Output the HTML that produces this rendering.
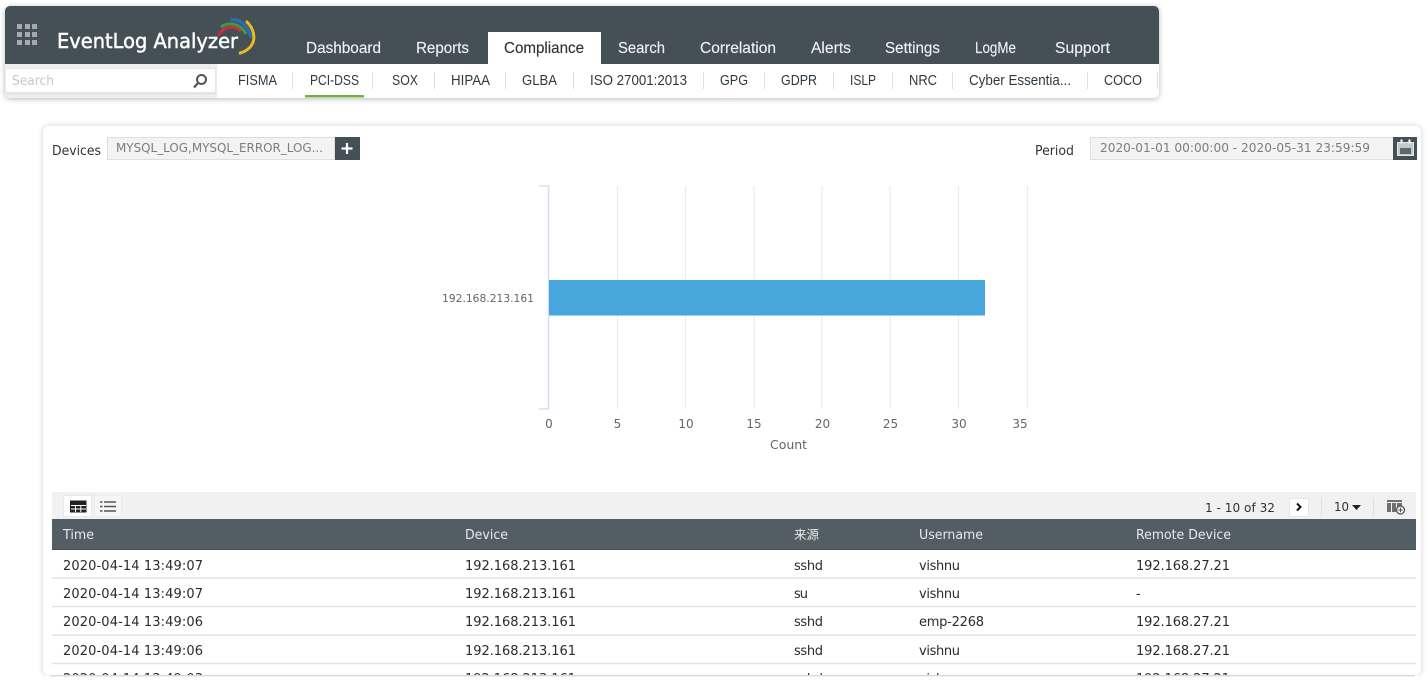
<!DOCTYPE html>
<html><head><meta charset="utf-8"><style>
html,body{margin:0;padding:0;width:1428px;height:682px;overflow:hidden;background:#fff}
.a{position:absolute}
svg{position:absolute;left:0;top:0}
text{font-family:"DejaVu Sans","Noto Sans CJK SC",sans-serif;font-size:13px;fill:#2b2b2b}
.n{font-family:"Liberation Sans",sans-serif;font-size:16px;fill:#eef0f1;stroke:#eef0f1;stroke-width:.15px}
.s{font-family:"Liberation Sans",sans-serif;font-size:15px;fill:#2e3a42}
.h{fill:#e6e9ea}
</style></head><body>
<div class="a" style="left:5px;top:6px;width:1154px;height:92px;border-radius:5px;background:#fff;box-shadow:0 1px 6px rgba(0,0,0,.28)"></div>
<div class="a" style="left:5px;top:6px;width:1154px;height:58px;border-radius:5px 5px 0 0;background:#444f56"></div>
<div class="a" style="left:5px;top:64px;width:212px;height:34px;background:#eef0f0;border-radius:0 0 0 5px"></div>
<div class="a" style="left:6px;top:68px;width:209px;height:23px;background:#fff;border:1px solid #e6e6e6;border-left:0;box-shadow:0 1px 1px #ddd"></div>
<div class="a" style="left:488px;top:32px;width:113px;height:32px;background:#fff"></div>
<div class="a" style="left:43px;top:126px;width:1378px;height:549px;border-radius:6px;background:#fff;box-shadow:0 0 6px rgba(0,0,0,.2)"></div>
<svg width="1428" height="682" viewBox="0 0 1428 682">
<!-- grid -->
<g fill="#a4aaae">
<rect x="17" y="24" width="5" height="5"/><rect x="25" y="24" width="5" height="5"/><rect x="32" y="24" width="5" height="5"/>
<rect x="17" y="32" width="5" height="5"/><rect x="25" y="32" width="5" height="5"/><rect x="32" y="32" width="5" height="5"/>
<rect x="17" y="40" width="5" height="5"/><rect x="25" y="40" width="5" height="5"/><rect x="32" y="40" width="5" height="5"/>
</g>
<!-- logo -->
<text x="57" y="48" textLength="181" lengthAdjust="spacingAndGlyphs" style="font-size:20px;fill:#fff;stroke:#fff;stroke-width:.45px;font-family:'DejaVu Sans',sans-serif">EventLog Analyzer</text>
<g fill="none">
<path d="M218.500 36C222 27 233 24 241 31" stroke="#c6303c" stroke-width="3"/>
<path d="M221 27C229 21 241 24 246 34" stroke="#3a9a4a" stroke-width="3"/>
<path d="M231 19.500C241 19 249 27 251 38" stroke="#2c6cb5" stroke-width="3.200"/>
<path d="M246 21C257 31 258 48 239 53.500" stroke="#eeb923" stroke-width="3"/>
</g>
<!-- nav -->
<text class="n" x="306" y="53" textLength="75" lengthAdjust="spacingAndGlyphs">Dashboard</text>
<text class="n" x="416" y="53" textLength="53" lengthAdjust="spacingAndGlyphs">Reports</text>
<text class="n" x="504" y="53" textLength="80" lengthAdjust="spacingAndGlyphs" style="fill:#333;stroke:#333">Compliance</text>
<text class="n" x="618" y="53" textLength="47" lengthAdjust="spacingAndGlyphs">Search</text>
<text class="n" x="700" y="53" textLength="76" lengthAdjust="spacingAndGlyphs">Correlation</text>
<text class="n" x="811" y="53" textLength="40" lengthAdjust="spacingAndGlyphs">Alerts</text>
<text class="n" x="885" y="53" textLength="55" lengthAdjust="spacingAndGlyphs">Settings</text>
<text class="n" x="975" y="53" textLength="41" lengthAdjust="spacingAndGlyphs">LogMe</text>
<text class="n" x="1055" y="53" textLength="55" lengthAdjust="spacingAndGlyphs">Support</text>
<!-- search -->
<text x="12" y="85" textLength="42" lengthAdjust="spacingAndGlyphs" style="font-family:'DejaVu Sans';font-size:13px;fill:#c4c8ca">Search</text>
<circle cx="201.500" cy="79.500" r="4.500" fill="none" stroke="#555" stroke-width="2"/>
<path d="M198 83L194 87.500" stroke="#555" stroke-width="2.200"/>
<!-- subnav -->
<text class="s" x="238" y="85" textLength="39" lengthAdjust="spacingAndGlyphs">FISMA</text>
<text class="s" x="310" y="85" textLength="49" lengthAdjust="spacingAndGlyphs">PCI-DSS</text>
<text class="s" x="392" y="85" textLength="26" lengthAdjust="spacingAndGlyphs">SOX</text>
<text class="s" x="451" y="85" textLength="39" lengthAdjust="spacingAndGlyphs">HIPAA</text>
<text class="s" x="522" y="85" textLength="35" lengthAdjust="spacingAndGlyphs">GLBA</text>
<text class="s" x="590" y="85" textLength="97" lengthAdjust="spacingAndGlyphs">ISO 27001:2013</text>
<text class="s" x="720" y="85" textLength="28" lengthAdjust="spacingAndGlyphs">GPG</text>
<text class="s" x="781" y="85" textLength="36" lengthAdjust="spacingAndGlyphs">GDPR</text>
<text class="s" x="850" y="85" textLength="26" lengthAdjust="spacingAndGlyphs">ISLP</text>
<text class="s" x="909" y="85" textLength="28" lengthAdjust="spacingAndGlyphs">NRC</text>
<text class="s" x="969" y="85" textLength="102" lengthAdjust="spacingAndGlyphs">Cyber Essentia...</text>
<text class="s" x="1104" y="85" textLength="38" lengthAdjust="spacingAndGlyphs">COCO</text>
<path d="M292.500 72v17M372.500 72v17M434.500 72v17M505.500 72v17M573.500 72v17M703.500 72v17M764.500 72v17M833.500 72v17M892.500 72v17M952.500 72v17M1087.500 72v17M1157.500 72v17" stroke="#dcdfe0"/>
<rect x="305" y="95" width="59" height="2.500" fill="#74b13f"/>
<!-- devices -->
<text x="52" y="155" textLength="49" lengthAdjust="spacingAndGlyphs" style="fill:#333">Devices</text>
<rect x="107.500" y="137.500" width="227" height="22" fill="#f3f3f3" stroke="#dedede"/>
<text x="116" y="152" textLength="207" lengthAdjust="spacingAndGlyphs" style="font-size:12px;fill:#7d7d7d">MYSQL_LOG,MYSQL_ERROR_LOG...</text>
<rect x="335" y="137" width="25" height="23" fill="#444f56"/>
<path d="M347 143v11M341.500 148.500h11" stroke="#fff" stroke-width="2.200"/>
<!-- period -->
<text x="1035" y="155" textLength="39" lengthAdjust="spacingAndGlyphs" style="fill:#333">Period</text>
<rect x="1090.500" y="137.500" width="303" height="22" fill="#f3f3f3" stroke="#dedede"/>
<text x="1100" y="152" textLength="270" lengthAdjust="spacingAndGlyphs" style="font-size:12px;fill:#7d7d7d">2020-01-01 00:00:00 - 2020-05-31 23:59:59</text>
<rect x="1393" y="137" width="24" height="23" fill="#444f56"/>
<rect x="1397.500" y="142.500" width="16" height="13" fill="#c2c8cb" stroke="#e6e8e9"/>
<rect x="1400" y="148" width="11" height="6" fill="#5d686e"/>
<path d="M1401.500 139.500v4M1409.500 139.500v4" stroke="#fff" stroke-width="2"/>
<!-- chart -->
<path d="M617.500 186v223M685.500 186v223M754 186v223M822 186v223M890 186v223M958.500 186v223M1027.500 186v223" stroke="#e9ebef" stroke-width="1.200"/>
<path d="M539 186h9.500v223H539" fill="none" stroke="#d3dfef" stroke-width="1.500"/>
<rect x="549" y="280" width="436" height="35.500" fill="#47a6dc"/>
<text x="442" y="302" textLength="92" lengthAdjust="spacingAndGlyphs" style="font-size:11px;fill:#666">192.168.213.161</text>
<g text-anchor="middle">
<text x="549" y="428" style="font-size:12px;fill:#666">0</text>
<text x="617.500" y="428" style="font-size:12px;fill:#666">5</text>
<text x="686" y="428" style="font-size:12px;fill:#666">10</text>
<text x="754" y="428" style="font-size:12px;fill:#666">15</text>
<text x="822.500" y="428" style="font-size:12px;fill:#666">20</text>
<text x="890.500" y="428" style="font-size:12px;fill:#666">25</text>
<text x="959" y="428" style="font-size:12px;fill:#666">30</text>
<text x="1020" y="428" style="font-size:12px;fill:#666">35</text>
</g>
<text x="770" y="449" textLength="37" lengthAdjust="spacingAndGlyphs" style="font-size:12.500px;fill:#666">Count</text>
<!-- toolbar -->
<rect x="52" y="492" width="1364" height="27" fill="#f1f1f1"/>
<rect x="63.500" y="495.500" width="28" height="21" fill="#fff" stroke="#e8e8e8"/>
<rect x="94.500" y="495.500" width="27" height="21" fill="#f6f6f6" stroke="#ececec"/>
<rect x="70" y="500.500" width="16.500" height="12" fill="#222"/>
<path d="M71 505.500h15M71 509h15M75.500 505v7M80.800 505v7" stroke="#fff"/>
<path d="M100 502h2.500M100 506.500h2.500M100 511h2.500M104 502h12M104 506.500h12M104 511h12" stroke="#555" stroke-width="1.500"/>
<text x="1205" y="512" textLength="70" lengthAdjust="spacingAndGlyphs" style="font-size:12px;fill:#333">1 - 10 of 32</text>
<rect x="1289.500" y="498.500" width="19" height="18" fill="#fff" stroke="#e6e6e6"/>
<path d="M1297 503.500l3.500 3.500-3.500 3.500" fill="none" stroke="#111" stroke-width="2"/>
<path d="M1321.500 498v18M1373.500 498v18" stroke="#dfdfdf"/>
<text x="1334" y="511" textLength="15" lengthAdjust="spacingAndGlyphs" style="font-size:12px;fill:#333">10</text>
<path d="M1352 505h9l-4.500 5z" fill="#222"/>
<rect x="1387" y="500" width="15" height="12" fill="#6c7073"/>
<path d="M1387 502.500h15M1391.500 503v9M1396.500 503v9" stroke="#f1f1f1"/>
<circle cx="1400.500" cy="510" r="4" fill="#f1f1f1" stroke="#555" stroke-width="1.300"/>
<path d="M1398.300 510h4.400M1400.500 507.800v4.400" stroke="#555"/>
<!-- table head -->
<rect x="52" y="519" width="1364" height="31" fill="#535e64"/>
<rect x="52" y="549" width="1364" height="1" fill="#444f56"/>
<text class="h" x="63" y="539" textLength="31" lengthAdjust="spacingAndGlyphs">Time</text>
<text class="h" x="465" y="539" textLength="43" lengthAdjust="spacingAndGlyphs">Device</text>
<text class="h" x="794" y="539" style="font-size:12.500px">来源</text>
<text class="h" x="919" y="539" textLength="64" lengthAdjust="spacingAndGlyphs">Username</text>
<text class="h" x="1136" y="539" textLength="95" lengthAdjust="spacingAndGlyphs">Remote Device</text>
<!-- rows -->
<path d="M52 578h1364M52 606.500h1364M52 635h1364M52 663.500h1364" stroke="#e4e4e4" stroke-width="1.500"/>
<g>
<text x="63" y="570" textLength="140">2020-04-14 13:49:07</text><text x="465" y="570" textLength="111">192.168.213.161</text><text x="794" y="570" textLength="29">sshd</text><text x="919" y="570" textLength="41">vishnu</text><text x="1136" y="570" textLength="94">192.168.27.21</text>
<text x="63" y="598" textLength="140">2020-04-14 13:49:07</text><text x="465" y="598" textLength="111">192.168.213.161</text><text x="794" y="598" textLength="14">su</text><text x="919" y="598" textLength="41">vishnu</text><text x="1136" y="598">-</text>
<text x="63" y="626" textLength="140">2020-04-14 13:49:06</text><text x="465" y="626" textLength="111">192.168.213.161</text><text x="794" y="626" textLength="29">sshd</text><text x="919" y="626" textLength="65">emp-2268</text><text x="1136" y="626" textLength="94">192.168.27.21</text>
<text x="63" y="655" textLength="140">2020-04-14 13:49:06</text><text x="465" y="655" textLength="111">192.168.213.161</text><text x="794" y="655" textLength="29">sshd</text><text x="919" y="655" textLength="41">vishnu</text><text x="1136" y="655" textLength="94">192.168.27.21</text>
<text x="63" y="683" textLength="140">2020-04-14 13:49:03</text><text x="465" y="683" textLength="111">192.168.213.161</text><text x="794" y="683" textLength="29">sshd</text><text x="919" y="683" textLength="41">vishnu</text><text x="1136" y="683" textLength="94">192.168.27.21</text>
</g>
<rect x="46" y="675" width="1372" height="7" fill="#fff"/>
<path d="M50 675.500h1365" stroke="#d8d8d8"/>
<path d="M50 676.500h1365" stroke="#f0f0f0"/>
</svg>
</body></html>
